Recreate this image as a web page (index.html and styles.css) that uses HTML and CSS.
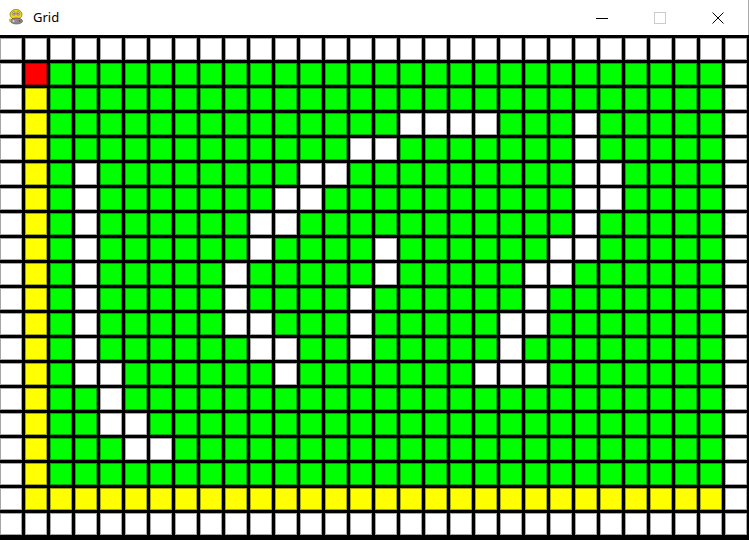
FILE: index.html
```html
<!DOCTYPE html>
<html lang="en">
<head>
  <meta charset="UTF-8">
  <title>Grid</title>
  <link rel="stylesheet" href="styles.css">
</head>
<body>
  <!-- window title bar -->
  <div class="titlebar">
    <svg class="app-icon" width="16" height="16" viewBox="0 0 16 16">
      <ellipse cx="8" cy="5.5" rx="6" ry="5" fill="#f2d21b" stroke="#8a7a10" stroke-width="0.8"/>
      <circle cx="5.8" cy="4.5" r="1.6" fill="#fff" stroke="#333" stroke-width="0.5"/>
      <circle cx="10.2" cy="4.5" r="1.6" fill="#fff" stroke="#333" stroke-width="0.5"/>
      <circle cx="6" cy="4.7" r="0.6" fill="#000"/>
      <circle cx="10" cy="4.7" r="0.6" fill="#000"/>
      <ellipse cx="8.5" cy="12" rx="6" ry="3" fill="#8c8c8c" stroke="#444" stroke-width="0.6"/>
      <circle cx="5.5" cy="12" r="1" fill="#ddd"/>
      <circle cx="11.5" cy="12" r="1" fill="#c33"/>
      <path d="M2.5 9.5 Q1 11 2.5 13" stroke="#d4b418" stroke-width="1.4" fill="none"/>
    </svg>
    <span class="title">Grid</span>
    <div class="controls">
      <svg width="12" height="12" viewBox="0 0 12 12"><path d="M0 6.5 H12" stroke="#000" stroke-width="1"/></svg>
      <svg width="12" height="12" viewBox="0 0 12 12"><rect x="0.5" y="0.5" width="11" height="11" fill="none" stroke="#ccc" stroke-width="1"/></svg>
      <svg width="12" height="12" viewBox="0 0 12 12"><path d="M0.5 0.5 L11.5 11.5 M11.5 0.5 L0.5 11.5" stroke="#000" stroke-width="1"/></svg>
    </div>
  </div>

  <!-- 30 x 20 cell board, filled by script -->
  <div class="board" id="board"></div>

  <script>
    const COLS = 30, ROWS = 20;
    // obstacle cells (white) inside the green area, by row
    const holes = {
      3: [16, 17, 18, 19, 23],
      4: [14, 15, 23],
      5: [3, 12, 13, 23, 24],
      6: [3, 11, 12, 23, 24],
      7: [3, 10, 11, 23],
      8: [3, 10, 15, 22, 23],
      9: [3, 9, 15, 21, 22],
      10: [3, 9, 14, 21],
      11: [3, 9, 10, 14, 20, 21],
      12: [3, 10, 11, 14, 20],
      13: [3, 4, 11, 19, 20, 21],
      14: [4],
      15: [4, 5],
      16: [5, 6]
    };

    function cellType(r, c) {
      if (r === 0 || r === ROWS - 1 || c === 0 || c === COLS - 1) return "empty";
      if (r === 1 && c === 1) return "start";
      if (c === 1 || r === ROWS - 2) return "path";
      if (holes[r] && holes[r].includes(c)) return "empty";
      return "open";
    }

    const board = document.getElementById("board");
    for (let r = 0; r < ROWS; r++) {
      for (let c = 0; c < COLS; c++) {
        const cell = document.createElement("div");
        cell.className = "cell " + cellType(r, c);
        board.appendChild(cell);
      }
    }
  </script>
</body>
</html>
```

FILE: styles.css
```css
html, body {
  margin: 0;
  background: #000;
  overflow: hidden;
}
/* title bar */
.titlebar {
  height: 35px;
  background: #fff;
  display: flex;
  align-items: center;
  font-family: "Noto Sans", "Open Sans", sans-serif;
  font-size: 13px;
  color: #000;
  border-right: 1px solid #aaa;
}
.app-icon {
  margin-left: 8px;
  margin-right: 9px;
  margin-top: -1px;
}
.title {
  margin-top: -1px;
}
.controls {
  margin-left: auto;
  margin-right: 24px;
  display: flex;
  gap: 46px;
}
.controls svg {
  display: block;
}
/* board */
.board {
  display: grid;
  grid-template-columns: repeat(30, 22px);
  grid-auto-rows: 22px;
  gap: 3px;
  padding-top: 3px;
}
.cell {
  box-shadow: inset 0 0 0 1px rgba(0, 0, 0, 0.35);
}
.cell.empty {
  background: #fff;
}
.cell.open {
  background: #00ff00;
}
.cell.path {
  background: #ffff00;
}
.cell.start {
  background: #ff0000;
}
```
